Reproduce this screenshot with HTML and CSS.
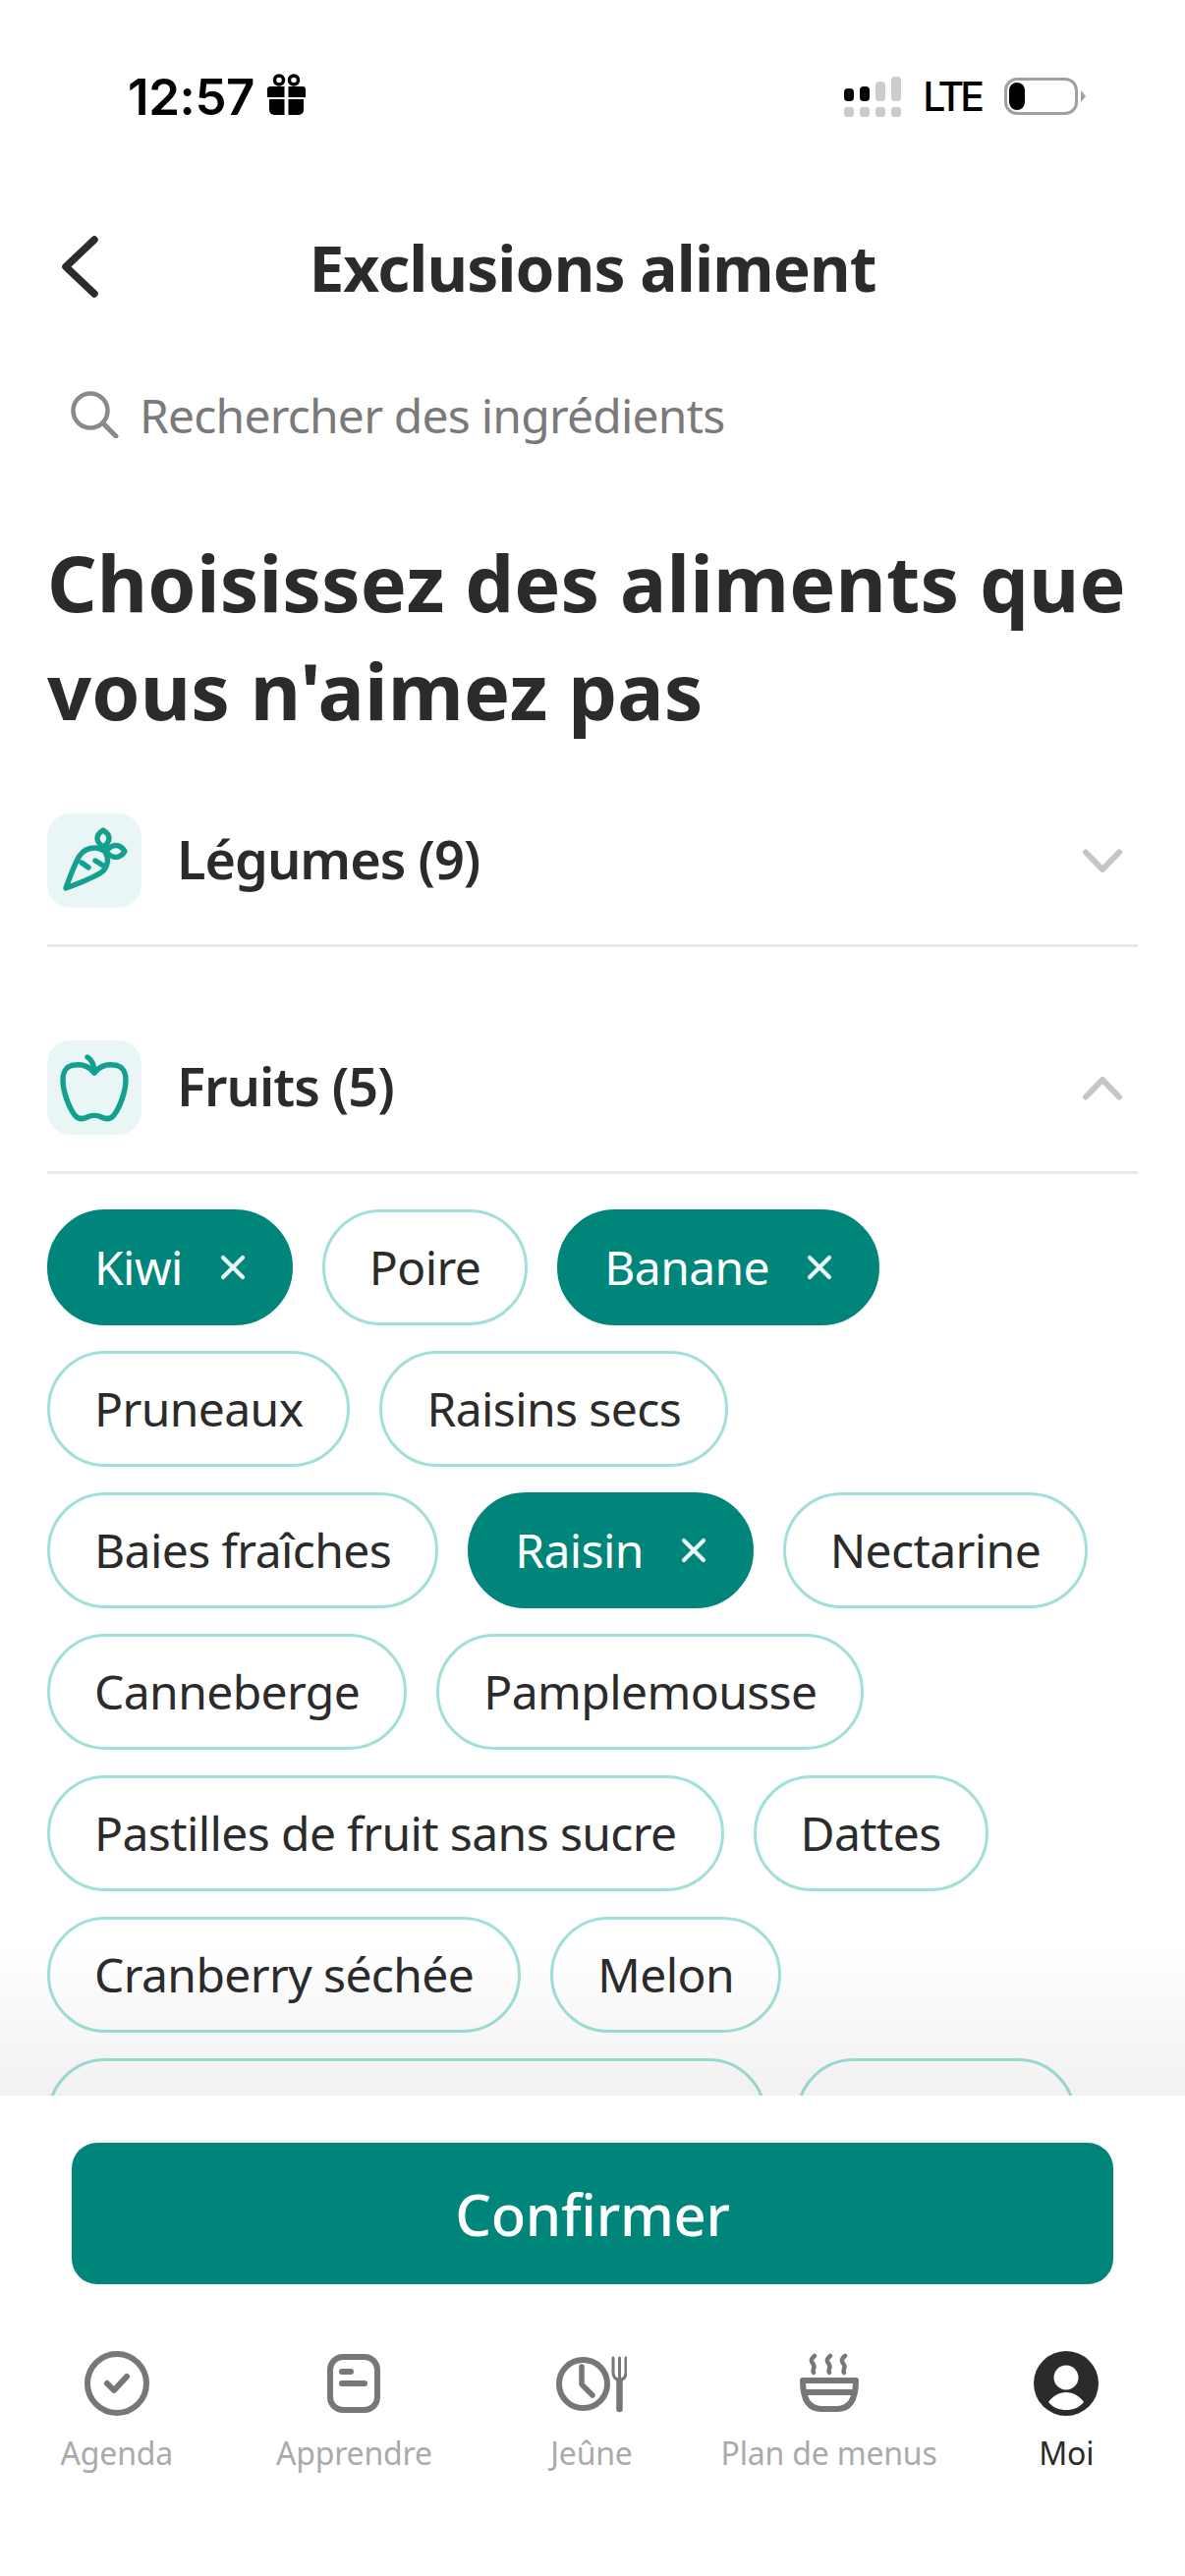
FILE: index.html
```html
<!DOCTYPE html>
<html lang="fr">
<head>
  <meta charset="UTF-8">
  <title>Exclusions aliment</title>
  <link rel="stylesheet" href="styles.css">
</head>
<body>
  <div class="screen">
    <header class="status">
      <div class="status-left">
        <span class="time">12:57</span>
        <svg class="gift" viewBox="0 0 39 42">
          <circle cx="12" cy="6.5" r="4.5" fill="none" stroke="#000" stroke-width="3.5"/>
          <circle cx="27" cy="6.5" r="4.5" fill="none" stroke="#000" stroke-width="3.5"/>
          <path d="M3 13h14.500v11H0v-8a3 3 0 0 1 3-3zM21.500 13H36a3 3 0 0 1 3 3v8H21.500zM2 26h15.500v16H7a5 5 0 0 1-5-5zM21.500 26H37v11a5 5 0 0 1-5 5H21.500z"/>
        </svg>
      </div>
      <div class="status-right">
        <div class="signal">
          <span class="bar bar-1 on"></span><span class="bar bar-2 on"></span><span class="bar bar-3"></span><span class="bar bar-4"></span>
          <span class="dot"></span><span class="dot"></span><span class="dot"></span><span class="dot"></span>
        </div>
        <span class="lte">LTE</span>
        <div class="battery"><span class="battery-fill"></span></div>
        <span class="battery-tip"></span>
      </div>
    </header>

    <div class="topbar">
      <svg class="back" viewBox="0 0 37 63"><path d="M33 4 4 31.500 33 59" fill="none" stroke="#2b2b2b" stroke-width="7.500" stroke-linecap="round" stroke-linejoin="round"/></svg>
      <h1 class="title">Exclusions aliment</h1>
    </div>

    <div class="search">
      <svg class="search-icon" viewBox="0 0 49 48">
        <circle cx="20" cy="20" r="17.500" fill="none" stroke="#8a8a8a" stroke-width="4.500"/>
        <path d="M33 33 46 46" stroke="#8a8a8a" stroke-width="5" stroke-linecap="round"/>
      </svg>
      <span>Rechercher des ingrédients</span>
    </div>

    <main class="content">
      <h2 class="heading">Choisissez des aliments que<br>vous n'aimez pas</h2>

      <section class="group group-closed">
        <div class="group-head">
          <div class="group-icon">
            <svg viewBox="0 0 96 96" fill="none" stroke="#14a08f" stroke-width="5.400" stroke-linecap="round" stroke-linejoin="round">
              <path d="M19 76C24 62 28 51 33 43 37 37 43 35 49 35 52 35 55 36 58 38 61 42 62 47 61 51 60 55 58 58 55 60 46 66 30 72 19 76Z"/>
              <path d="M57 17C49 22 49 28 57 34 65 28 65 22 57 17Z"/>
              <path d="M79 38.500C74 30.500 66 30.500 60 38.500 66 46.500 74 46.500 79 38.500Z"/>
              <path d="M35 50 42 55M49 48 57 53"/>
            </svg>
          </div>
          <span class="group-name">Légumes (9)</span>
          <svg class="chevron" viewBox="0 0 46 27"><path d="M7 4.500 24 22 41 4.500" fill="none" stroke="#c6c6c6" stroke-width="6" stroke-linecap="round" stroke-linejoin="round"/></svg>
        </div>
      </section>

      <section class="group">
        <div class="group-head">
          <div class="group-icon">
            <svg viewBox="0 0 96 96" fill="none" stroke="#14a08f" stroke-width="5.400" stroke-linecap="round" stroke-linejoin="round">
              <path d="M48 33C44 27 36 24 29 25 20 25 16 32 16 40 16 52 22 68 28 76 32 81 37 80 41 78 45 76 51 76 55 78 59 80 64 81 68 76 74 68 80 52 80 40 80 32 76 25 67 25 60 24 52 27 48 33Z"/>
              <path d="M41 17C46 20 48 26 48 33"/>
            </svg>
          </div>
          <span class="group-name">Fruits (5)</span>
          <svg class="chevron" viewBox="0 0 46 27"><path d="M7 22.500 24 5 41 22.500" fill="none" stroke="#c6c6c6" stroke-width="6" stroke-linecap="round" stroke-linejoin="round"/></svg>
        </div>

        <div class="chips">
          <span class="chip selected">Kiwi<svg class="chip-x" viewBox="0 0 26 26"><path d="M3 3 23 23M23 3 3 23" stroke="#e9f6f5" stroke-width="4.200" stroke-linecap="round"/></svg></span>
          <span class="chip">Poire</span>
          <span class="chip selected">Banane<svg class="chip-x" viewBox="0 0 26 26"><path d="M3 3 23 23M23 3 3 23" stroke="#e9f6f5" stroke-width="4.200" stroke-linecap="round"/></svg></span>
          <span class="chip">Pruneaux</span>
          <span class="chip">Raisins secs</span>
          <span class="chip">Baies fraîches</span>
          <span class="chip selected">Raisin<svg class="chip-x" viewBox="0 0 26 26"><path d="M3 3 23 23M23 3 3 23" stroke="#e9f6f5" stroke-width="4.200" stroke-linecap="round"/></svg></span>
          <span class="chip">Nectarine</span>
          <span class="chip">Canneberge</span>
          <span class="chip">Pamplemousse</span>
          <span class="chip">Pastilles de fruit sans sucre</span>
          <span class="chip">Dattes</span>
          <span class="chip">Cranberry séchée</span>
          <span class="chip">Melon</span>
          <span class="chip chip-cut-a"></span>
          <span class="chip chip-cut-b"></span>
        </div>
      </section>
      <div class="fade"></div>
    </main>

    <footer class="footer">
      <button class="confirm">Confirmer</button>
      <nav class="tabs">
        <div class="tab">
          <svg class="tab-icon" width="66" height="66" viewBox="0 0 66 66" fill="none" stroke="#777" stroke-width="6" stroke-linecap="round" stroke-linejoin="round">
            <circle cx="33" cy="33" r="30"/>
            <path d="M23 33 30 40 43 26"/>
          </svg>
          <span>Agenda</span>
        </div>
        <div class="tab">
          <svg class="tab-icon" width="54" height="66" viewBox="0 0 54 66" fill="none" stroke="#777" stroke-width="6" stroke-linecap="round">
            <rect x="3" y="6" width="48" height="54" rx="13"/>
            <path d="M15 21H24M15 33H38"/>
          </svg>
          <span>Apprendre</span>
        </div>
        <div class="tab">
          <svg class="tab-icon" width="72" height="66" viewBox="0 0 72 66" fill="none" stroke="#777" stroke-linecap="round" stroke-linejoin="round">
            <circle cx="27.500" cy="33.500" r="24.500" stroke-width="6"/>
            <path d="M26 16V34L37 45" stroke-width="5.500"/>
            <path d="M58 7V22C58 27 61 29 64.500 30 68 29 71 27 71 22V7M64.500 7V30" stroke-width="3"/>
            <path d="M64.500 30V59" stroke-width="6.500"/>
          </svg>
          <span>Jeûne</span>
        </div>
        <div class="tab">
          <svg class="tab-icon" width="60" height="66" viewBox="0 0 60 66" fill="none" stroke="#777" stroke-linecap="round" stroke-linejoin="round">
            <path d="M3 30H57C57 50 50 59 38 59H22C10 59 3 50 3 30Z" stroke-width="6"/>
            <path d="M5 42H55" stroke-width="6"/>
            <path d="M15 5C10 9 12 11 14 14 16 17 12 19 14 22M31 5C26 9 28 11 30 14 32 17 28 19 30 22M46 5C41 9 43 11 45 14 47 17 43 19 45 22" stroke-width="4.500"/>
          </svg>
          <span>Plan de menus</span>
        </div>
        <div class="tab tab-active">
          <svg class="tab-icon" width="66" height="66" viewBox="0 0 66 66">
            <circle cx="33" cy="33" r="33" fill="#2b2b2b"/>
            <circle cx="33" cy="27" r="12.500" fill="#fff"/>
            <path d="M15 52C19 46 26 42 33 42 40 42 47 46 51 52 46 58 40 60 33 60 26 60 20 58 15 52Z" fill="#fff"/>
          </svg>
          <span>Moi</span>
        </div>
      </nav>
    </footer>
  </div>
</body>
</html>
```
FILE: styles.css
```css
* {
  box-sizing: border-box;
}
body {
  margin: 0;
  background: #fff;
  color: #2b2b2b;
  font-family: "Noto Sans", sans-serif;
}
.screen {
  width: 1206px;
  height: 2622px;
  display: flex;
  flex-direction: column;
  overflow: hidden;
}

/* status bar */
.status {
  height: 196px;
  flex: none;
  display: flex;
  justify-content: space-between;
  align-items: center;
  padding: 0 101px 0 130px;
}
.status-left {
  display: flex;
  align-items: center;
  gap: 13px;
}
.time {
  font-family: Inter, sans-serif;
  font-weight: 600;
  font-size: 51px;
  letter-spacing: -0.4px;
  color: #000;
}
.gift {
  width: 39px;
  height: 42px;
  margin-top: -4px;
}
.status-right {
  display: flex;
  align-items: center;
}
.signal {
  display: grid;
  grid-template-columns: repeat(4, 10px);
  grid-template-rows: 25px 10px;
  column-gap: 6px;
  row-gap: 6px;
  margin-right: 22px;
}
.bar {
  align-self: end;
  background: #ccc;
  border-radius: 4px;
}
.bar.on {
  background: #000;
}
.bar-1 { height: 13px; }
.bar-2 { height: 15px; }
.bar-3 { height: 20px; }
.bar-4 { height: 25px; }
.dot {
  background: #ccc;
  border-radius: 3px;
}
.lte {
  font-family: Inter, sans-serif;
  font-weight: 500;
  font-size: 41px;
  letter-spacing: -4px;
  color: #000;
  margin-right: 24px;
}
.battery {
  width: 75px;
  height: 38px;
  border: 3.5px solid #a0a0a0;
  border-radius: 13px;
  padding: 2px;
}
.battery-fill {
  display: block;
  width: 16px;
  height: 100%;
  background: #000;
  border-radius: 8px;
}
.battery-tip {
  width: 5px;
  height: 12px;
  margin-left: 3px;
  background: #a0a0a0;
  clip-path: polygon(0 0, 100% 50%, 0 100%);
}

/* top */
.topbar {
  height: 152px;
  flex: none;
  display: flex;
  align-items: center;
  justify-content: center;
  position: relative;
}
.back {
  position: absolute;
  left: 63px;
  top: 44px;
  width: 37px;
  height: 63px;
}
.title {
  margin: 0;
  font-size: 64px;
  font-weight: 700;
  letter-spacing: -0.9px;
}
.search {
  height: 148px;
  flex: none;
  display: flex;
  align-items: center;
  gap: 21px;
  padding-left: 72px;
  color: #7a7a7a;
  font-size: 48px;
  letter-spacing: -0.8px;
}
.search-icon {
  width: 49px;
  height: 48px;
}

.content {
  flex: 1;
  min-height: 0;
  padding: 42px 48px 0;
  overflow: hidden;
  position: relative;
}
.heading {
  margin: 0 0 70px;
  font-size: 79px;
  line-height: 110px;
  font-weight: 700;
  letter-spacing: 0.15px;
}
.group-closed {
  margin-bottom: 95px;
}
.group-head {
  display: flex;
  align-items: center;
  padding-bottom: 37px;
  border-bottom: 3px solid #e8e8e8;
}
.group-icon {
  width: 96px;
  height: 96px;
  border-radius: 24px;
  background: #e9f6f5;
}
.group-icon svg {
  display: block;
  width: 96px;
  height: 96px;
}
.group-name {
  flex: 1;
  margin-left: 36px;
  padding-bottom: 4px;
  font-size: 54px;
  font-weight: 600;
  letter-spacing: -1px;
}
.chevron {
  width: 46px;
  height: 27px;
  margin-right: 14px;
}
.chips {
  display: flex;
  flex-wrap: wrap;
  gap: 26px 30px;
  padding-top: 36px;
}
.chip {
  height: 118px;
  display: inline-flex;
  align-items: center;
  padding: 0 45px 2px;
  border: 3px solid #a0e0d8;
  border-radius: 59px;
  font-size: 48px;
  letter-spacing: -0.6px;
  white-space: nowrap;
}
.chip.selected {
  background: #00857a;
  border-color: #00857a;
  color: #fff;
}
.chip-x {
  width: 26px;
  height: 26px;
  margin-left: 38px;
  margin-top: 2px;
}
.chip-cut-a {
  width: 732px;
}
.chip-cut-b {
  width: 285px;
}
.fade {
  position: absolute;
  left: 0;
  right: 0;
  bottom: 0;
  height: 155px;
  background: linear-gradient(rgba(0, 0, 0, 0), rgba(0, 0, 0, 0.055));
}

/* bottom */
.footer {
  height: 489px;
  flex: none;
  padding-top: 48px;
  background: #fff;
}
.confirm {
  display: block;
  width: 1060px;
  height: 144px;
  margin: 0 auto 68px;
  padding: 0;
  border: 0;
  border-radius: 26px;
  background: #00857a;
  color: #fff;
  font-family: inherit;
  font-size: 58px;
  font-weight: 500;
  letter-spacing: -0.3px;
}
.tabs {
  display: grid;
  grid-template-columns: repeat(5, 1fr);
  margin-left: -2px;
}
.tab {
  display: flex;
  flex-direction: column;
  align-items: center;
  color: #aaa;
  font-size: 32px;
  letter-spacing: -0.2px;
}
.tab-icon {
  display: block;
  margin-bottom: 16px;
}
.tab-active {
  color: #2b2b2b;
}
```
